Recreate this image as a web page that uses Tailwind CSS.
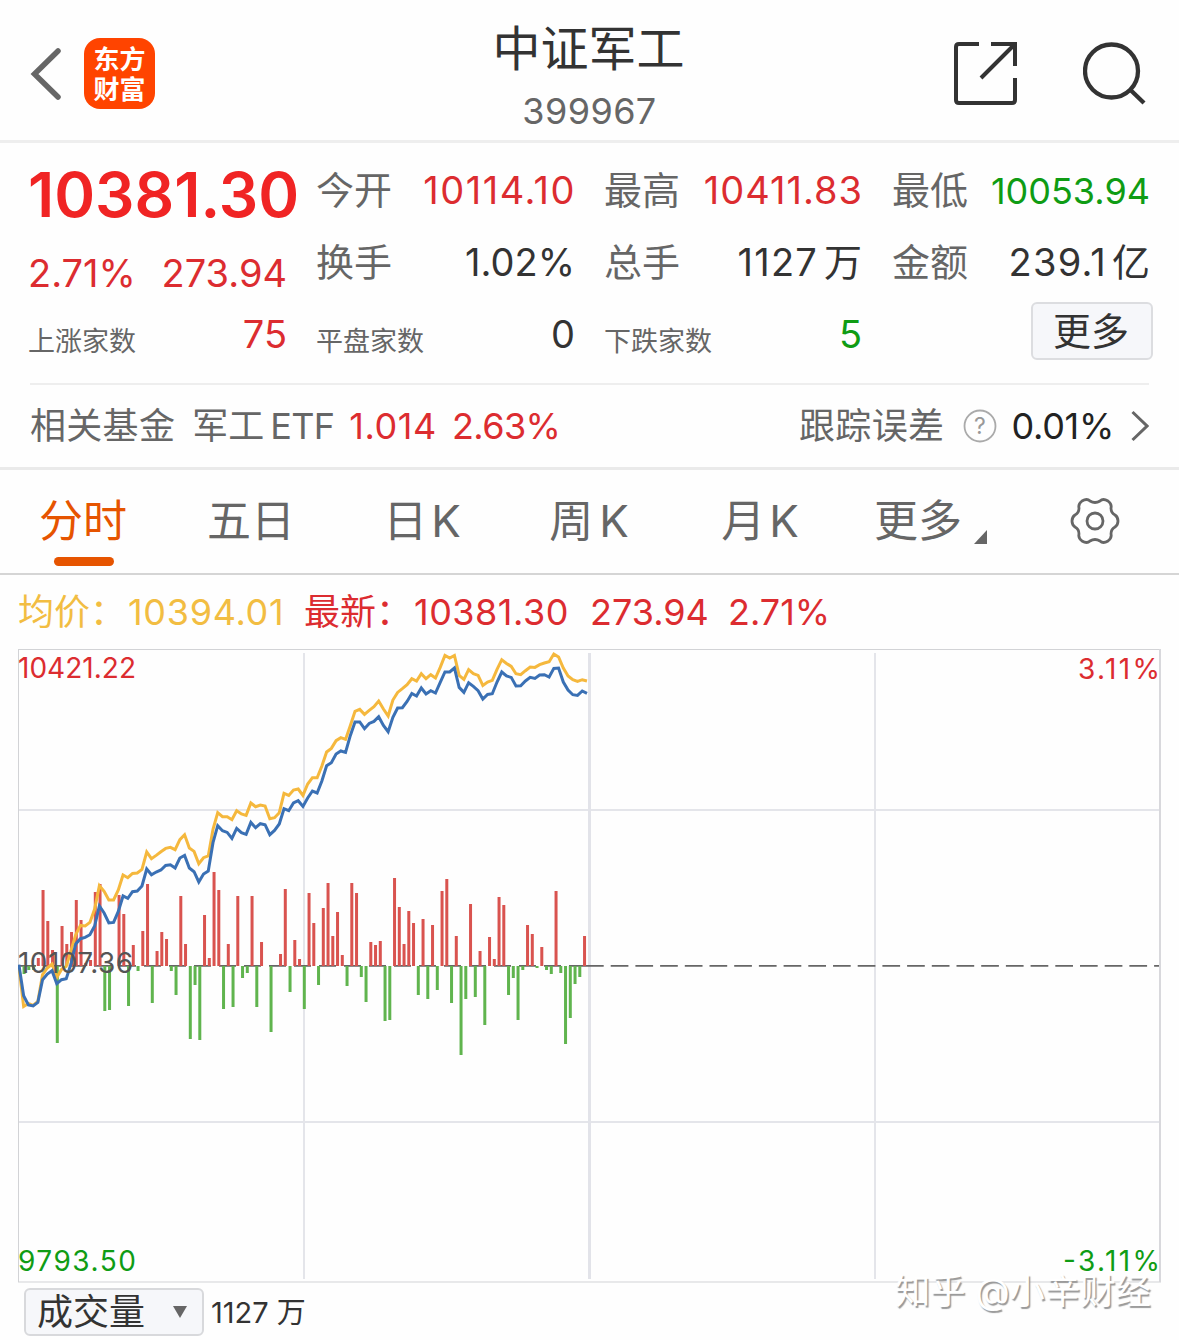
<!DOCTYPE html>
<html lang="zh-CN">
<head>
    <meta charset="UTF-8">
    <meta name="viewport" content="width=device-width, initial-scale=1.0">
    <title>中证军工 399967</title>
    <script src="https://cdn.jsdelivr.net/npm/@tailwindcss/browser@4"></script>
</head>
<body class="bg-[#fefefe] w-[1179px] h-[1340px] overflow-hidden font-['Inter','Noto_Sans_CJK_SC',sans-serif] text-[#666]">
    <!-- Header -->
    <header class="flex justify-between h-[143px] border-b-3 border-[#eee] pl-[28px] pr-[30px]">
        <div class="flex items-center w-[300px] h-[146px] gap-[20px]">
            <svg class="w-9 h-15" viewBox="0 0 36 60" fill="none" stroke="#666" stroke-width="5.5" stroke-linecap="round"><path d="M30 8L6.500 31L30 54"/></svg>
            <div class="flex flex-col items-center justify-center w-[71px] h-[71px] rounded-2xl bg-[#ff4400] text-white font-bold text-[26px] leading-[30px] pt-[3px]">
                <span>东方</span>
                <span>财富</span>
            </div>
        </div>
        <div class="flex flex-col items-center pt-[20px]">
            <h1 class="text-[48px] leading-[58px] text-[#333]">中证军工</h1>
            <div class="text-[36px] leading-[44px] mt-[11px] ml-[2px] tracking-[0.4px]">399967</div>
        </div>
        <div class="flex items-center justify-end w-[300px] h-[146px] gap-[65px]">
            <svg class="w-[65px] h-[65px]" viewBox="0 0 65 65" fill="none" stroke="#333" stroke-width="4"><path d="M26 3H6Q3 3 3 6V59Q3 62 6 62H59Q62 62 62 59V37M38 3H62V25M62 3L28 37"/></svg>
            <svg class="w-[66px] h-[66px]" viewBox="0 0 66 66" fill="none" stroke="#333" stroke-width="4.300"><circle cx="28.500" cy="31" r="26.500"/><path d="M47 49.500L61 63"/></svg>
        </div>
    </header>

    <!-- Quote summary -->
    <section class="grid grid-cols-[259px_259px_258px_259px] gap-x-[29px] h-[240px] pl-[28px] pt-[18px] text-[38px] text-[#333]">
        <div>
            <div class="text-[62px] leading-[68px] font-semibold text-[#f02424] whitespace-nowrap">10381.30</div>
            <div class="flex justify-between leading-[48px] mt-[20px] text-[#dc2c30]"><span>2.71%</span><span>273.94</span></div>
            <div class="flex justify-between h-[48px] leading-[48px] mt-[13px]"><span class="text-[27px] pt-[8px] text-[#666]">上涨家数</span><span class="text-[#dc2c30]">75</span></div>
        </div>
        <div>
            <div class="flex justify-between leading-[58px]"><span class="text-[#666]">今开</span><span class="tracking-[1.5px] -mr-[1px] text-[#dc2c30]">10114.10</span></div>
            <div class="flex justify-between leading-[58px] mt-[14px]"><span class="text-[#666]">换手</span><span>1.02%</span></div>
            <div class="flex justify-between h-[48px] leading-[48px] mt-[19px]"><span class="text-[27px] pt-[8px] text-[#666]">平盘家数</span><span>0</span></div>
        </div>
        <div>
            <div class="flex justify-between leading-[58px]"><span class="text-[#666]">最高</span><span class="tracking-[1px] -mr-[1px] text-[#dc2c30]">10411.83</span></div>
            <div class="flex justify-between leading-[58px] mt-[14px]"><span class="text-[#666]">总手</span><span><span class="tracking-[1.2px] mr-[6px]">1127</span>万</span></div>
            <div class="flex justify-between h-[48px] leading-[48px] mt-[19px]"><span class="text-[27px] pt-[8px] text-[#666]">下跌家数</span><span class="text-[#0f9c14]">5</span></div>
        </div>
        <div>
            <div class="flex justify-between h-[58px] leading-[58px]"><span class="ml-[1px] text-[#666]">最低</span><span class="text-[36px] pt-[1px] text-[#0f9c14]">10053.94</span></div>
            <div class="flex justify-between leading-[58px] mt-[14px]"><span class="ml-[1px] text-[#666]">金额</span><span><span class="tracking-[1.2px] mr-[5px]">239.1</span>亿</span></div>
            <button class="block w-[122px] h-[58px] mt-[11px] ml-[140px] rounded-md border-2 border-[#dcdde0] bg-[#f6f7fa] pr-[2px] text-[38px] leading-[54px] whitespace-nowrap">更多</button>
        </div>
    </section>

    <!-- Related fund -->
    <section class="flex items-center justify-between h-[84px] mx-[30px] border-t-2 border-[#eee] text-[36px] whitespace-nowrap">
        <div class="flex items-center">
            <span class="tracking-[0.3px]">相关基金</span>
            <span class="ml-[17px]">军工</span>
            <span class="ml-[6px] tracking-[-0.7px]">ETF</span>
            <span class="ml-[15px] tracking-[0.6px] text-[#dc2c30]">1.014</span>
            <span class="ml-[15px] tracking-[-0.6px] text-[#dc2c30]">2.63%</span>
        </div>
        <div class="flex items-center">
            <span class="tracking-[0.4px]">跟踪误差</span>
            <svg class="w-[34px] h-[34px] ml-[18px]" viewBox="0 0 34 34"><circle cx="17" cy="17" r="15.500" fill="none" stroke="#aaa" stroke-width="1.800"/><text x="17" y="25" text-anchor="middle" font-size="23" fill="#999">?</text></svg>
            <span class="ml-[15px] tracking-[-0.3px] text-[#222]">0.01%</span>
            <svg class="w-[18px] h-[34px] ml-[17px]" viewBox="0 0 18 34" fill="none" stroke="#666" stroke-width="3"><path d="M1.500 3L16 17L1.500 31"/></svg>
        </div>
    </section>

    <!-- Period tabs -->
    <nav class="flex h-[108px] border-t-3 border-b-2 border-t-[#eaeaea] border-b-[#d5d5d5] pt-[18px] text-[44px] leading-[66px] whitespace-nowrap">
        <div class="flex flex-col items-center w-[168px] text-[#e65400]">
            <span class="mr-[2px]">分时</span>
            <span class="w-[60px] h-[9px] mt-[3px] rounded-full bg-[#e65400]"></span>
        </div>
        <div class="w-[166px] text-center">五日</div>
        <div class="flex justify-center gap-[4px] w-[176px]"><span>日</span><span>K</span></div>
        <div class="flex justify-center gap-[6px] w-[158px]"><span>周</span><span>K</span></div>
        <div class="flex justify-center gap-[4px] w-[184px]"><span>月</span><span>K</span></div>
        <div class="flex w-[218px] pl-[22px]">更多
            <svg class="w-[13px] h-[14px] ml-[12px] mt-[42px]" viewBox="0 0 13 14"><path d="M13 0V14H0Z" fill="#666"/></svg>
        </div>
        <svg class="w-[50px] h-[50px] mt-[8px]" viewBox="-25 -25 50 50" fill="none" stroke="#666" stroke-width="2.800" stroke-linejoin="round">
            <path d="M-13 -20Q-8 -23 -5 -20Q0 -17 5 -20Q8 -23 13 -20Q17 -17 16 -13Q16 -8 20 -6Q23 -4 23 0Q23 4 20 6Q16 8 16 13Q17 17 13 20Q8 23 5 20Q0 17 -5 20Q-8 23 -13 20Q-17 17 -16 13Q-16 8 -20 6Q-23 4 -23 0Q-23 -4 -20 -6Q-16 -8 -16 -13Q-17 -17 -13 -20Z"/>
            <circle r="8"/>
        </svg>
    </nav>

    <!-- Chart legend -->
    <div class="flex items-center h-[74px] pl-[18px] text-[36px] whitespace-nowrap text-[#dc2c30]">
        <span class="w-[110px] text-[#f2bd42]">均价：</span>
        <span class="w-[176px] tracking-[0.7px] text-[#f2bd42]">10394.01</span>
        <span class="w-[110px]">最新：</span>
        <span class="w-[176px] tracking-[0.5px]">10381.30</span>
        <span class="w-[138px]">273.94</span>
        <span>2.71%</span>
    </div>

    <!-- Intraday chart -->
    <div class="relative ml-[18px] w-[1143px] h-[634px]">
        <svg class="block w-[1143px] h-[634px]" viewBox="18 649 1143 634" fill="none">
            <path d="M18.500 649.500V1282M18 649.500H1161M18 1282H1161" stroke="#d2d3d6"/>
            <path d="M1160 649V1282" stroke="#d8d8dc" stroke-width="2"/>
            <path d="M304 653V1279M875 653V1279M19 810H1159M19 1122H1159" stroke="#e4e5ea" stroke-width="2"/>
            <path d="M589.500 653V1279" stroke="#e2e3e9" stroke-width="3"/>
            <path d="M19 965.800H586" stroke="#666" stroke-width="1.800" stroke-dasharray="17 8"/>
            <path d="M586 965.800H1159" stroke="#666" stroke-width="1.800" stroke-dasharray="17.700 7"/>
            <path id="up" stroke="#d9534f" stroke-width="3"/>
            <path id="down" stroke="#60b44e" stroke-width="3"/>
            <polyline id="avg" stroke="#f5b83d" stroke-width="3"/>
            <polyline id="price" stroke="#3a70b4" stroke-width="3"/>
            <g font-size="28">
                <text x="18" y="678" fill="#dc2c30" textLength="118">10421.22</text>
                <text x="18" y="973" fill="#555" textLength="115">10107.36</text>
                <text x="18" y="1271" fill="#0f9c14" textLength="118">9793.50</text>
                <text x="1078" y="679" fill="#dc2c30" textLength="82">3.11%</text>
                <text x="1063" y="1271" fill="#0f9c14" textLength="97">-3.11%</text>
            </g>
        </svg>
        <div class="absolute left-[877px] top-[618px] text-[35.3px] leading-[50px] text-white whitespace-nowrap [text-shadow:1.5px_1.5px_1px_#999]">知乎 @小辛财经</div>
    </div>

    <!-- Indicator picker -->
    <div class="flex items-center mt-[5px] ml-[24px] text-[#333]">
        <button class="flex items-center justify-between w-[180px] h-[48px] pl-[11px] pr-[15px] rounded-md border-2 border-[#d8d9dc] bg-[#f6f7fa] text-[36px] leading-none whitespace-nowrap">成交量
            <svg class="w-[14px] h-[12px]" viewBox="0 0 14 12"><path d="M0 0H14L7 12Z" fill="#666"/></svg>
        </button>
        <span class="ml-[7px] text-[29px] leading-none">1127 万</span>
    </div>

    <script>
        // per-minute flow, positive is drawn up from the zero line
        const flow = [0,
            -8,-4,-4,8,76,45,16,-77,40,22,34,66,46,3,6,74,82,-45,-44,0,
            71,52,-40,21,-5,35,82,-37,15,34,27,-5,-29,70,22,-73,-19,-74,51,8,
            94,76,-43,22,-41,70,-12,-7,70,-41,24,0,-66,0,12,77,-26,26,7,-43,
            73,43,-19,58,83,30,54,11,-20,83,73,-11,-36,24,21,25,-55,-54,88,59,
            22,55,43,-29,47,-33,41,-24,75,87,-37,30,-89,-33,62,-31,15,-59,29,7,
            69,61,-29,-12,-54,-4,41,32,-2,19,-4,-8,75,-7,-78,-52,-18,-11,30];
        const price = [964,
            995,1004.3,1005.3,1001.7,979,973.3,970,983,979,978,963.3,943.3,938,936.7,934,925.3,905.3,912.3,922.3,921.7,
            910.7,895.3,897.7,891,890.3,885.3,868.3,874,871.3,869.3,864.7,864,867.3,857.3,854.7,867.3,871,881.3,873.3,870.3,
            842,825,830,831.7,837.7,827.7,832,833.7,821.7,827,823,824,834,829.7,823.3,808,810,802.3,800,805.7,
            797.3,790.3,792.3,780.3,765,762,753.3,750.3,751.7,735,721.3,721.3,728,722.7,720.7,716,724.7,731,716.7,707.3,
            707,700.7,692.7,695.3,687.3,693.3,690,692.3,681.7,671.3,671.3,667.3,686.7,691.7,682,685.7,690,698.3,693.7,693,
            681.3,671.3,675.3,676.7,685.3,685,680.3,676.7,677.7,674.3,674,676.3,667.7,667.3,681.3,689.3,694,694.7,690.3,692.7];
        const avg = [966,
            1005.7,1002.7,1004.7,1000.7,974,967.3,963.3,976.7,968.7,965.7,950,934,924.7,925.3,921.7,908.3,885,890.7,899.3,899.3,
            889.3,874.3,877,872.7,872.3,868.7,851.3,858,854.7,851,847.7,846.7,849,839,834,847.3,850.7,863,857,855.3,
            828.7,812,816,816,819,810,813.3,814.7,802.3,806,804.3,805.3,818,817,812,792.7,794.7,789.3,788.3,794.7,
            783.3,777,777,765.3,751.3,747.7,740,737,738.7,725,710.7,708.7,713.7,709.7,706,700.3,708.3,715.3,699.3,691.7,
            688,684,678,680.3,673,678,674,677.3,666.7,654.7,657.3,654.7,674.7,678.7,669,673,674.7,684.7,681.3,679.7,
            668.7,659,662.7,665.7,673,674,670,666.3,666.7,664,662.3,661,653.3,656.3,667.3,675.3,679,680.7,679,680.3];

        const bars = (keep) => flow.map((v, i) => keep(v) ? `M${19.3 + 4.75 * i} 966v${-v}` : '').join('');
        const line = (ys) => ys.map((y, i) => `${18.9 + 4.734 * i},${y + 0.7}`).join(' ');
        document.getElementById('up').setAttribute('d', bars((v) => v > 0));
        document.getElementById('down').setAttribute('d', bars((v) => v < 0));
        document.getElementById('avg').setAttribute('points', line(avg));
        document.getElementById('price').setAttribute('points', line(price));
    </script>
</body>
</html>
